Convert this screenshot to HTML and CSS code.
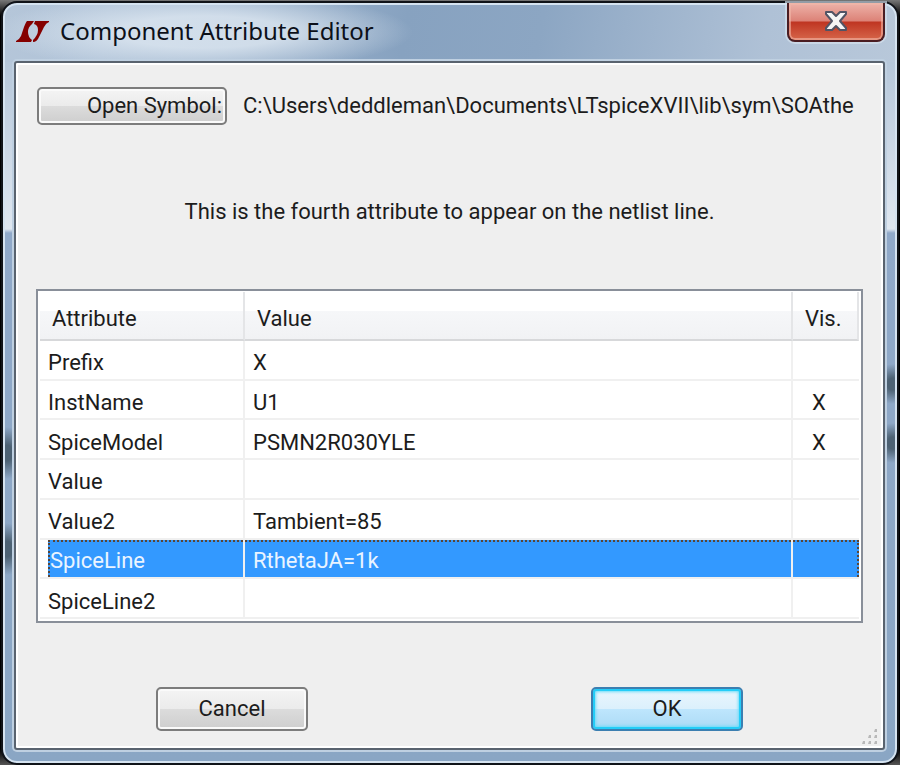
FILE: index.html
```html
<!DOCTYPE html>
<html lang="en">
<head>
<meta charset="utf-8">
<title>Component Attribute Editor</title>
<link rel="stylesheet" href="styles.css">
</head>
<body>
<main class="window">
  <header class="titlebar">
    <svg class="logo" viewBox="0 0 34 22" aria-hidden="true">
      <path fill="#850000" d="M11 0H18L16 3Q12 6 12 11Q12 16 16 19L15 21H0V20Q3 19 5 15L8 6Q10 1 11 0Z"/>
      <path fill="#850000" d="M19 0H33V1Q30 2 28 6L23 16Q21 21 17 21L17 19Q22 14 22 9Q22 4 18 3Z"/>
    </svg>
    <h1 class="title">Component Attribute Editor</h1>
    <button class="close" type="button" aria-label="Close">
      <svg viewBox="0 0 24 22" aria-hidden="true">
        <path d="M2 2H8L12 6L16 2H22V4L16 11L22 18V20H16L12 16L8 20H2V18L8 11L2 4Z" fill="#f5f5f5" stroke="#515465" stroke-width="2" stroke-linejoin="round"/>
      </svg>
    </button>
  </header>
  <section class="client">
    <div class="symbol-row">
      <button class="button open" type="button">Open Symbol:</button>
      <span class="path">C:\Users\deddleman\Documents\LTspiceXVII\lib\sym\SOAthe</span>
    </div>
    <p class="hint">This is the fourth attribute to appear on the netlist line.</p>
    <div class="listbox">
      <table class="attributes">
        <colgroup><col class="col-name"><col><col class="col-vis"></colgroup>
        <thead><tr><th>Attribute</th><th>Value</th><th>Vis.</th></tr></thead>
        <tbody>
          <tr><td>Prefix</td><td>X</td><td></td></tr>
          <tr><td>InstName</td><td>U1</td><td>X</td></tr>
          <tr><td>SpiceModel</td><td>PSMN2R030YLE</td><td>X</td></tr>
          <tr><td>Value</td><td></td><td></td></tr>
          <tr><td>Value2</td><td>Tambient=85</td><td></td></tr>
          <tr class="selected"><td><span>SpiceLine</span></td><td><span>RthetaJA=1k</span></td><td><span></span></td></tr>
          <tr><td>SpiceLine2</td><td></td><td></td></tr>
        </tbody>
      </table>
    </div>
    <div class="actions">
      <button class="button" type="button">Cancel</button>
      <button class="button default" type="button">OK</button>
    </div>
    <svg class="grip" viewBox="0 0 18 18" aria-hidden="true">
      <path fill="#b9b9b9" d="M14 1h2v3h-3zM8 7h2v3H7zM14 7h2v3h-3zM2 13h2v3H1zM8 13h2v3H7zM14 13h2v3h-3z"/>
    </svg>
  </section>
</main>
</body>
</html>
```
FILE: styles.css
```css
* { box-sizing: border-box; }
body {
  margin: 0;
  min-height: 100vh;
  display: flex;
  background: linear-gradient(#777, #000 16px, #000 calc(100% - 16px), #555);
  font: 22px/28px Roboto, sans-serif;
  color: #1c1c1c;
}
.window {
  flex: 1;
  min-width: 0;
  display: flex;
  flex-direction: column;
  margin: 1px 1px 0 1px;
  padding: 0 12px 13px 11px;
  border: 2px solid #101318;
  border-radius: 16px;
  box-shadow: inset 0 0 0 2px #d5e3f0;
  background:
    radial-gradient(ellipse 20px 26px at 4px 450px, #4d6274 30%, transparent),
    radial-gradient(ellipse 20px 26px at 4px 546px, #4d6274 30%, transparent),
    radial-gradient(ellipse 20px 20px at calc(100% - 4px) 381px, #4d6274 30%, transparent),
    radial-gradient(ellipse 20px 20px at calc(100% - 4px) 440px, #4d6274 30%, transparent),
    radial-gradient(ellipse 210px 40px at 200px 29px, #dde7f1cc 40%, transparent) 0 0 / 100% 59px no-repeat,
    linear-gradient(100deg, #b5c6d9 0, #b0c3d8 12%, #87a2c0 45%, #8ca6c3 60%, #afc1d6 85%, #b8c8da) 0 0 / 100% 59px no-repeat,
    linear-gradient(#b6c7da 60px, #dfe7f0 226px, #90a9c9 230px, #8aa6c4);
}
.titlebar {
  display: flex;
  align-items: center;
  height: 58px;
}
.logo { width: 34px; height: 22px; margin-left: 2px; }
.title {
  flex: 1;
  margin: 0;
  padding: 0 0 2px 10px;
  font: 24px/56px "Noto Sans", sans-serif;
  color: #0c1019;
}
.close {
  align-self: flex-start;
  width: 98px;
  height: 39px;
  padding: 0;
  border: 2px solid #4a1d22;
  border-top: 0;
  border-radius: 0 0 8px 8px;
  background: linear-gradient(#eeb3aa, #dc8277 18px, #bf3522 19px, #d6664a);
  box-shadow: inset 0 0 0 2px #f2b7a999, 0 0 0 2px #d5e1edaa;
}
.close svg { display: block; width: 24px; height: 22px; margin: 0 auto 2px; }
.client {
  flex: 1;
  display: flex;
  flex-direction: column;
  position: relative;
  padding: 24px 20px 17px;
  border: 2px solid #59636f;
  border-radius: 3px;
  box-shadow: 0 0 0 2px #bfd0e1, inset 0 0 0 2px #fff;
  background: #efefef;
}
.symbol-row { display: flex; align-items: center; gap: 16px; padding-left: 1px; }
.button {
  width: 152px;
  height: 44px;
  padding: 0;
  font: inherit;
  color: inherit;
  border: 2px solid #7c7c7c;
  border-radius: 5px;
  background: linear-gradient(#f4f4f4, #ebebeb 50%, #dcdcdc 50%, #cecece);
  box-shadow: inset 0 0 0 2px #fafafa;
}
.open {
  flex: none;
  width: 190px;
  height: 38px;
  padding-right: 3px;
  text-align: right;
}
.path { flex: 1; min-width: 0; overflow: hidden; white-space: nowrap; }
.hint { margin: 73px 0 63px; text-align: center; }
.listbox {
  padding: 1px 2px 2px;
  border: 2px solid #898f99;
  background: #fff;
}
.attributes {
  width: 100%;
  height: 327px;
  table-layout: fixed;
  border-collapse: separate;
  border-spacing: 0;
}
.col-name { width: 205px; }
.col-vis { width: 66px; }
th {
  height: 49px;
  padding: 6px 0 0 12px;
  font-weight: normal;
  text-align: left;
  border-right: 2px solid #e4e5e7;
  border-bottom: 2px solid #d7d8da;
  background: linear-gradient(#fff 40%, #f6f7f9 41%, #f1f2f4);
}
td {
  height: 39px;
  padding: 7px 0 0 8px;
  border-right: 2px solid #f0f0f0;
  border-bottom: 2px solid #f0f0f0;
}
td:last-child { padding-left: 19px; border-right: 0; }
.selected td, .selected td:last-child { padding: 0; }
.selected span {
  display: block;
  height: 37px;
  padding: 5px 0 0 8px;
  border-top: 2px dotted #5c4535;
  background: #3399ff;
  color: #eaf4ff;
}
.selected td:first-child span {
  margin-left: 8px;
  padding-left: 0;
  border-left: 2px dotted #5c4535;
}
.selected td:last-child span { border-right: 2px dotted #5c4535; }
.actions {
  display: flex;
  justify-content: space-between;
  margin-top: auto;
  padding: 0 120px;
}
.default {
  border-color: #3c7fb1;
  background: linear-gradient(#eaf6fd, #dbf0fc 50%, #bee6fd 50%, #abdaf5);
  box-shadow: inset 0 0 0 2px #24cdf8, inset 0 0 3px 3px #6bdcf8;
}
.grip { position: absolute; right: 4px; bottom: 2px; width: 18px; height: 18px; }
```
